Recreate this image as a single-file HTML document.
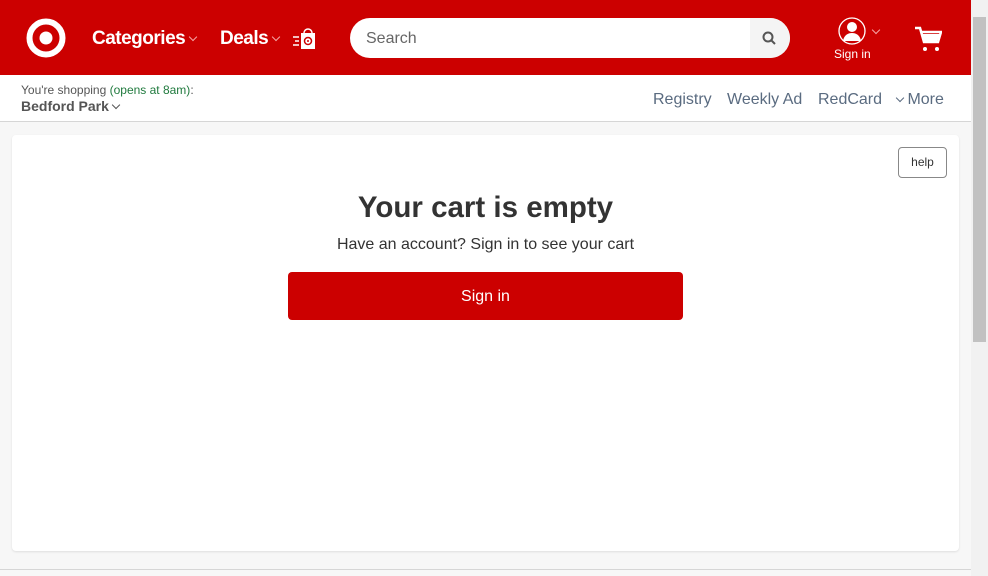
<!DOCTYPE html><html><head><style>
*{margin:0;padding:0;box-sizing:border-box}
body{width:988px;height:576px;overflow:hidden;background:#f7f7f7;font-family:"Liberation Sans",Arial,sans-serif;position:relative}
.hdr{position:absolute;left:0;top:0;width:971px;height:75px;background:#cc0000}
.sub{position:absolute;left:0;top:75px;width:971px;height:47px;background:#fff;border-bottom:1px solid #d6d6d6}
.sb{position:absolute;right:0;top:0;width:17px;height:576px;background:#f1f1f1}
.thumb{position:absolute;left:2px;top:17px;width:13px;height:325px;background:#c1c1c1}
.card{position:absolute;left:12px;top:135px;width:947px;height:416px;background:#fff;border-radius:4px;box-shadow:0 1px 2px rgba(0,0,0,.1)}
.w{color:#fff;font-weight:bold;position:absolute}
.chev{display:inline-block;width:6px;height:6px;border-right:1.3px solid currentColor;border-bottom:1.3px solid currentColor;transform:rotate(45deg);vertical-align:middle;margin-top:-4px}
</style></head><body>
<div class="hdr">
<svg style="position:absolute;left:26px;top:18px" width="40" height="40"><circle cx="20" cy="20" r="16.5" fill="none" stroke="#fff" stroke-width="6"/><circle cx="20" cy="20" r="6.5" fill="#fff"/></svg>
<div class="w" style="left:92px;top:28px;font-size:19px;letter-spacing:-.5px">Categories <span class="chev" style="color:#f5a5a5;font-weight:normal"></span></div>
<div class="w" style="left:220px;top:28px;font-size:19px;letter-spacing:-.5px">Deals <span class="chev" style="color:#f5a5a5"></span></div>
<svg style="position:absolute;left:292px;top:25px" width="24" height="25"><path d="M9 8h14v16H9z" fill="#fff"/><path d="M12 8a4 4 0 0 1 8 0" stroke="#fff" stroke-width="1.5" fill="none"/><circle cx="16" cy="16" r="3.5" fill="none" stroke="#c00" stroke-width="1.5"/><circle cx="16" cy="16" r="1" fill="#c00"/><path d="M1 12h6M3 16h4M1 20h6" stroke="#fff" stroke-width="1.5"/></svg>
<div style="position:absolute;left:350px;top:18px;width:440px;height:40px;background:#fff;border-radius:20px;overflow:hidden">
<span style="position:absolute;left:16px;top:12px;font-size:16px;color:#666">Search</span>
<div style="position:absolute;right:0;top:0;width:40px;height:40px;background:#f4f4f4"></div>
<svg style="position:absolute;right:14px;top:13px" width="14" height="14"><circle cx="6" cy="6" r="4.5" fill="none" stroke="#555" stroke-width="2"/><path d="M9.5 9.5L13 13" stroke="#555" stroke-width="2"/></svg>
</div>
<svg style="position:absolute;left:838px;top:17px" width="30" height="30"><circle cx="14" cy="14" r="13" fill="none" stroke="#fff" stroke-width="1.3"/><circle cx="14" cy="10" r="5" fill="#fff"/><path d="M5 24c1-6 5-8 9-8s8 2 9 8z" fill="#fff"/></svg>
<span class="chev" style="position:absolute;left:873px;top:31px;color:#f5a5a5"></span>
<div style="position:absolute;left:834px;top:47px;color:#fff;font-size:12px">Sign in</div>
<svg style="position:absolute;left:914px;top:26px" width="28" height="26"><path d="M1 2h5l4 14h14l3-10H8" fill="none" stroke="#fff" stroke-width="2.5"/><path d="M8 8h18l-3 7H10z" fill="#fff"/><circle cx="11" cy="23" r="2" fill="#fff"/><circle cx="23" cy="23" r="2" fill="#fff"/></svg>
</div>
<div class="sub">
<div style="position:absolute;left:21px;top:8px;font-size:12px;color:#555">You're shopping <span style="color:#207a3e">(opens at 8am)</span>:</div>
<div style="position:absolute;left:21px;top:23px;font-size:14px;font-weight:bold;color:#555">Bedford Park <span class="chev" style="color:#555"></span></div>
<div style="position:absolute;left:653px;top:16px;font-size:16px;color:#5a6b80">Registry</div>
<div style="position:absolute;left:727px;top:16px;font-size:16px;color:#5a6b80">Weekly Ad</div>
<div style="position:absolute;left:818px;top:16px;font-size:16px;color:#5a6b80">RedCard</div>
<div style="position:absolute;left:897px;top:16px;font-size:16px;color:#5a6b80"><span class="chev"></span> More</div>
</div>
<div class="card">
<div style="position:absolute;left:886px;top:12px;width:49px;height:31px;border:1px solid #888;border-radius:4px;font-size:12px;color:#333;text-align:center;line-height:29px">help</div>
<div style="position:absolute;left:0;width:947px;top:56px;text-align:center;font-size:29.5px;font-weight:bold;color:#333">Your cart is empty</div>
<div style="position:absolute;left:0;width:947px;top:101px;text-align:center;font-size:16px;color:#333">Have an account? Sign in to see your cart</div>
<div style="position:absolute;left:276px;top:137px;width:395px;height:48px;background:#cc0000;border-radius:4px;color:#fff;font-size:16px;text-align:center;line-height:50px">Sign in</div>
</div>
<div style="position:absolute;left:0;top:569px;width:971px;height:1px;background:#d6d6d6"></div>
<div class="sb"><div class="thumb"></div></div>
</body></html>
